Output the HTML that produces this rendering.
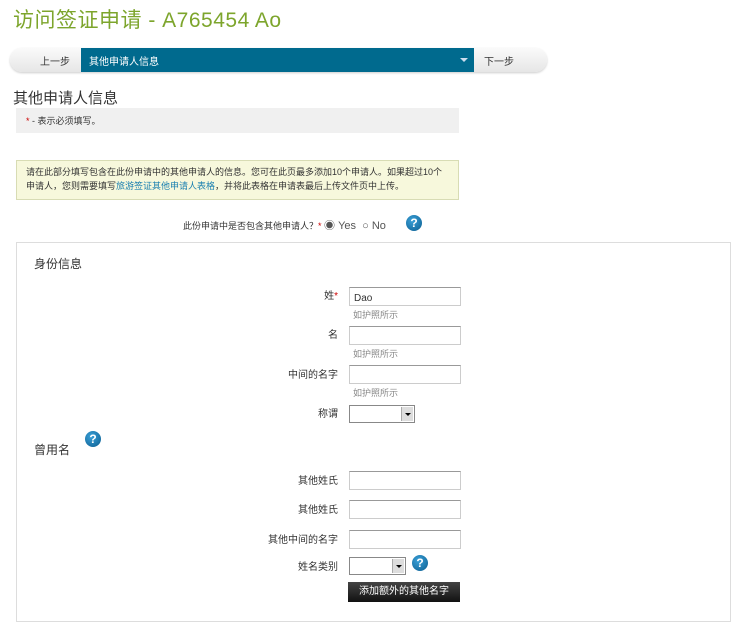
<!DOCTYPE html>
<html><head><meta charset="utf-8"><style>
body{margin:0;width:750px;height:607px;background:#fff;position:relative;overflow:hidden;font-family:"Liberation Sans","Noto Sans CJK SC",sans-serif;color:#333}
.a{position:absolute;white-space:nowrap}
.s{font-size:10px}
.inp{position:absolute;left:349px;width:110px;height:17px;border:1px solid #ccc;border-top-color:#999;background:#fff}
.lab{position:absolute;right:412px;font-size:10px;text-align:right}
.hint{position:absolute;left:353px;font-size:9px;color:#888}
.q{position:absolute;width:16px;height:16px;border-radius:50%;background:radial-gradient(circle at 40% 35%,#3aa0d8,#0b5d8f);color:#fff;font-weight:bold;font-size:12px;text-align:center;line-height:16px}
.sel{position:absolute;border:1px solid #888;background:#fff;height:16px}
.sel i{position:absolute;right:1px;top:1px;width:11px;height:14px;background:#ddd;border-left:1px solid #aaa}
.sel i:after{content:"";position:absolute;left:3px;top:6px;border:3px solid transparent;border-top:3px solid #000}
</style></head><body>
<div class="a" style="left:13px;top:4px;font-size:21px;color:#7da52c;letter-spacing:0.5px">访问签证申请 - A765454 Ao</div>
<div class="a" style="left:10px;top:48px;width:537px;height:24px;border-radius:12px;background:linear-gradient(#fafafa,#e6e6e6);box-shadow:0 1px 2px #ccc"></div>
<div class="a s" style="left:40px;top:53px">上一步</div>
<div class="a" style="left:81px;top:48px;width:393px;height:24px;background:#006a8e"></div>
<div class="a s" style="left:89px;top:53px;color:#fff">其他申请人信息</div>
<div class="a" style="left:460px;top:58px;border:4px solid transparent;border-top:4px solid #cde"></div>
<div class="a s" style="left:484px;top:53px">下一步</div>
<div class="a" style="left:13px;top:87px;font-size:15px">其他申请人信息</div>
<div class="a" style="left:16px;top:108px;width:443px;height:25px;background:#f0f0f0"></div>
<div class="a" style="left:26px;top:114px;font-size:9px"><span style="color:#c00">*</span> - 表示必须填写。</div>
<div class="a" style="left:16px;top:160px;width:443px;height:40px;background:#f7f8dc;border:1px solid #d8dcb4;box-sizing:border-box"></div>
<div class="a" style="left:26px;top:165px;font-size:9px;line-height:14px">请在此部分填写包含在此份申请中的其他申请人的信息。您可在此页最多添加10个申请人。如果超过10个<br>申请人，您则需要填写<span style="color:#1a7fb0">旅游签证其他申请人表格</span>，并将此表格在申请表最后上传文件页中上传。</div>
<div class="a" style="left:183px;top:217px;font-size:9px">此份申请中是否包含其他申请人？<span style="color:#c00">*</span> <span style="font-size:11px;color:#555">◉ Yes &nbsp;○ No</span></div>
<div class="q" style="left:406px;top:215px">?</div>
<div class="a" style="left:16px;top:242px;width:715px;height:380px;border:1px solid #ddd;box-sizing:border-box"></div>
<div class="a" style="left:34px;top:255px;font-size:12px">身份信息</div>
<div class="lab" style="top:287px">姓<span style="color:#c00">*</span></div>
<div class="inp" style="top:287px"><span style="font-size:10px;margin-left:4px;line-height:17px">Dao</span></div>
<div class="hint" style="top:308px">如护照所示</div>
<div class="lab" style="top:326px">名</div>
<div class="inp" style="top:326px"></div>
<div class="hint" style="top:347px">如护照所示</div>
<div class="lab" style="top:366px">中间的名字</div>
<div class="inp" style="top:365px"></div>
<div class="hint" style="top:386px">如护照所示</div>
<div class="lab" style="top:405px">称谓</div>
<div class="sel" style="left:349px;top:405px;width:64px"><i></i></div>
<div class="a" style="left:34px;top:441px;font-size:12px">曾用名</div>
<div class="q" style="left:85px;top:431px">?</div>
<div class="lab" style="top:472px">其他姓氏</div>
<div class="inp" style="top:471px"></div>
<div class="lab" style="top:501px">其他姓氏</div>
<div class="inp" style="top:500px"></div>
<div class="lab" style="top:531px">其他中间的名字</div>
<div class="inp" style="top:530px"></div>
<div class="lab" style="top:558px">姓名类别</div>
<div class="sel" style="left:349px;top:557px;width:55px"><i></i></div>
<div class="q" style="left:412px;top:555px">?</div>
<div class="a" style="left:348px;top:582px;width:112px;height:20px;background:linear-gradient(#444,#111);color:#fff;font-size:10px;text-align:center;line-height:20px">添加额外的其他名字</div>
</body></html>
